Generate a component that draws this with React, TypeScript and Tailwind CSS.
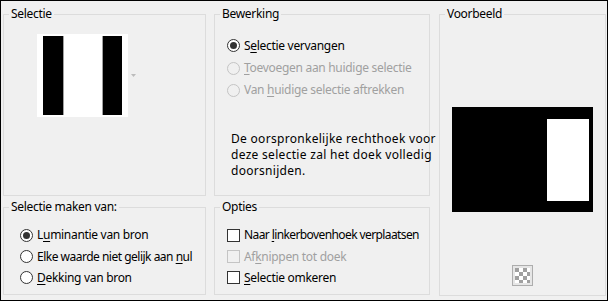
import React from "react";

const font = { fontFamily: '"Noto Sans", "Segoe UI", sans-serif' };

function Radio({ checked, disabled }: { checked?: boolean; disabled?: boolean }) {
  return (
    <span
      className={`w-[13px] h-[13px] rounded-full border flex items-center justify-center shrink-0 ${
        disabled ? "border-[#c4c4c4] bg-[#f0f0f0]" : "border-[#333333] bg-white"
      }`}
    >
      {checked && <span className="w-[7px] h-[7px] rounded-full bg-[#333333]" />}
    </span>
  );
}

function Check({ disabled }: { disabled?: boolean }) {
  return (
    <span
      className={`w-[13px] h-[13px] border shrink-0 ${
        disabled ? "border-[#c4c4c4] bg-[#f0f0f0]" : "border-[#333333] bg-white"
      }`}
    />
  );
}

function U({ children }: { children: React.ReactNode }) {
  return <span className="underline underline-offset-2">{children}</span>;
}

function Legend({ children }: { children: React.ReactNode }) {
  return <legend className="ml-[5px] px-[2px] leading-[16px] text-black whitespace-nowrap">{children}</legend>;
}

const box = "border border-[#dcdcdc] min-w-0 shrink-0";

export default function App() {
  return (
    <div
      className="w-[608px] h-[301px] border border-black bg-[#f0f0f0] text-[12px] tracking-[-0.3px] text-black flex pl-[2px] pt-[5px] gap-[9px] overflow-hidden whitespace-nowrap"
      style={font}
    >
      <div className="flex flex-col gap-[3px] w-[427px] shrink-0">
        <div className="flex gap-[8px]">
          <fieldset className={`w-[203px] h-[190px] ${box}`}>
            <Legend>Selectie</Legend>
            <div className="flex items-start pl-[33px] pt-[12px]">
              <svg width="91" height="83" viewBox="0 0 91 83" className="block">
                <rect x="0" y="0" width="91" height="83" fill="#fff" />
                <rect x="6" y="2" width="20" height="79" fill="#000" />
                <rect x="26" y="2" width="1" height="79" fill="#a0a0a0" />
                <rect x="65" y="2" width="1" height="79" fill="#a0a0a0" />
                <rect x="66" y="2" width="19" height="79" fill="#000" />
              </svg>
              <svg width="5" height="3" viewBox="0 0 5 3" className="block ml-[3px] mt-[40px]">
                <polygon points="0,0 5,0 2.5,3" fill="#bcbcbc" />
              </svg>
            </div>
          </fieldset>
          <fieldset className={`w-[216px] h-[190px] ${box}`}>
            <Legend>Bewerking</Legend>
            <div className="flex flex-col pl-[12px] pt-[12px]">
              <div className="h-[23px] flex items-center gap-[4px]">
                <Radio checked />
                <span>
                  S<U>e</U>lectie vervangen
                </span>
              </div>
              <div className="h-[22px] flex items-center gap-[4px] text-[#a0a0a0]">
                <Radio disabled />
                <span>
                  <U>T</U>oevoegen aan huidige selectie
                </span>
              </div>
              <div className="h-[22px] flex items-center gap-[4px] text-[#a0a0a0]">
                <Radio disabled />
                <span>
                  Van <U>h</U>uidige selectie aftrekken
                </span>
              </div>
            </div>
            <p className="mt-[30px] leading-[16px] pl-[16px] tracking-[0.3px]">
              De oorspronkelijke rechthoek voor
              <br />
              deze selectie zal het doek volledig
              <br />
              doorsnijden.
            </p>
          </fieldset>
        </div>
        <div className="flex gap-[8px]">
          <fieldset className={`w-[203px] h-[96px] ${box}`}>
            <Legend>Selectie maken van:</Legend>
            <div className="flex flex-col pl-[16px] pt-[9px]">
              <div className="h-[22px] flex items-center gap-[4px]">
                <Radio checked />
                <span>
                  L<U>u</U>minantie van bron
                </span>
              </div>
              <div className="h-[21px] flex items-center gap-[4px]">
                <Radio />
                <span className="tracking-[-0.5px]">
                  Elke waarde niet gelijk aan <U>n</U>ul
                </span>
              </div>
              <div className="h-[21px] flex items-center gap-[4px]">
                <Radio />
                <span>
                  <U>D</U>ekking van bron
                </span>
              </div>
            </div>
          </fieldset>
          <fieldset className={`w-[216px] h-[96px] ${box}`}>
            <Legend>Opties</Legend>
            <div className="flex flex-col pl-[12px] pt-[9px]">
              <div className="h-[22px] flex items-center gap-[4px]">
                <Check />
                <span className="tracking-[-0.6px]">
                  Naar <U>l</U>inkerbovenhoek verplaatsen
                </span>
              </div>
              <div className="h-[21px] flex items-center gap-[4px] text-[#a0a0a0]">
                <Check disabled />
                <span>
                  Af<U>k</U>nippen tot doek
                </span>
              </div>
              <div className="h-[21px] flex items-center gap-[4px]">
                <Check />
                <span>
                  <U>S</U>electie omkeren
                </span>
              </div>
            </div>
          </fieldset>
        </div>
      </div>
      <fieldset className={`w-[167px] h-[290px] ${box} flex flex-col items-center`}>
        <Legend>Voorbeeld</Legend>
        <div className="w-[141px] h-[105px] bg-black mt-[85px] flex justify-end items-start pt-[12px] pr-[4px]">
          <div className="w-[42px] h-[82px] bg-white" />
        </div>
        <div className="mt-[53px] w-[21px] h-[21px] border border-[#adadad] bg-[#e6e6e6] flex items-center justify-center">
          <svg width="15" height="15" viewBox="0 0 15 15" className="block">
            <rect width="15" height="15" fill="#ffffff" />
            <rect x="0" y="0" width="4" height="4" fill="#a0a0a0" />
            <rect x="8" y="0" width="4" height="4" fill="#a0a0a0" />
            <rect x="4" y="4" width="4" height="4" fill="#a0a0a0" />
            <rect x="12" y="4" width="3" height="4" fill="#a0a0a0" />
            <rect x="0" y="8" width="4" height="4" fill="#a0a0a0" />
            <rect x="8" y="8" width="4" height="4" fill="#a0a0a0" />
            <rect x="4" y="12" width="4" height="3" fill="#a0a0a0" />
            <rect x="12" y="12" width="3" height="3" fill="#a0a0a0" />
          </svg>
        </div>
      </fieldset>
    </div>
  );
}
